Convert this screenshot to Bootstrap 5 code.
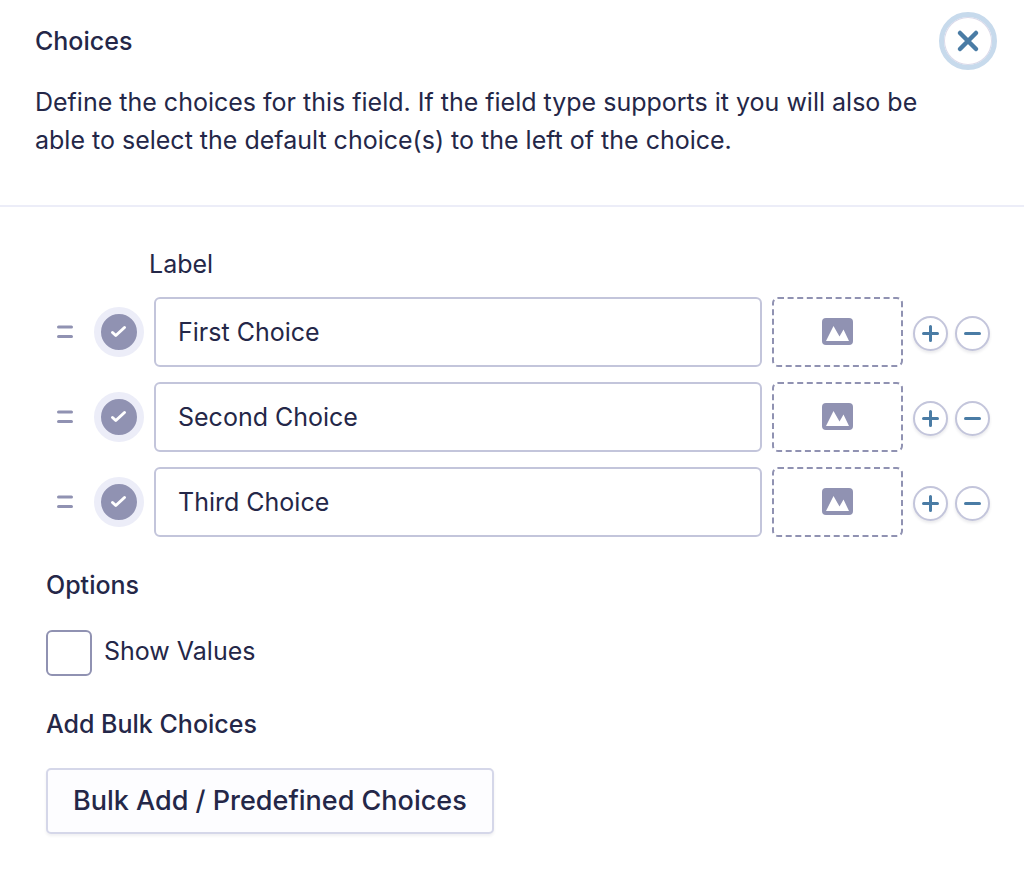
<!DOCTYPE html>
<html lang="en">
<head>
<meta charset="utf-8">
<meta name="viewport" content="width=device-width, initial-scale=1">
<title>Choices</title>
<link href="https://cdn.jsdelivr.net/npm/bootstrap@5.3.0/dist/css/bootstrap.min.css" rel="stylesheet">
<style>
  body { font-family: Inter, sans-serif; font-size: 25px; line-height: 38px; color: #242748; background: #fff; }
  h1, h2 { font-size: 25px; line-height: 32px; font-weight: 500; margin: 0; }
  .panel-head { padding: 12px 27px 46px 35px; border-bottom: 2px solid #ecedf8; }
  .intro { max-width: 900px; margin: 13px 0 0; }
  .icon-btn { flex: none; display: grid; place-items: center; padding: 0; background: #fff; }
  .close-btn { width: 58px; height: 58px; border: 5px solid #c7daec; border-radius: 50%; color: #4a7ca5; box-shadow: inset 0 0 0 1px #dcd9e9; }
  .panel-main { padding: 38px 34px 40px 46px; }
  .label-head { padding-left: 103px; margin-bottom: 14px; }
  .choice-list { display: grid; gap: 15px; }
  .drag-handle { width: 38px; height: 36px; border: 0; color: #9092b2; }
  .default-tick { appearance: none; flex: none; width: 50px; height: 50px; margin: 0 10px; border: 7px solid #ecedf8; border-radius: 50%; background: #9092b2 url("data:image/svg+xml,%3Csvg xmlns='http://www.w3.org/2000/svg' viewBox='0 0 36 36'%3E%3Cpath d='M11.500 18.500l3.300 3 8.700-8' fill='none' stroke='white' stroke-width='3' stroke-linecap='round' stroke-linejoin='round'/%3E%3C/svg%3E") center / 36px no-repeat; }
  .choice-input { height: 70px; border: 2px solid #c3c5db; border-radius: 6px; padding: 0 22px; font-size: 25px; color: #242748; }
  .image-btn { width: 131px; height: 70px; margin: 0 10px; border: 0; color: #9092b2; }
  .round-btn { width: 35px; height: 35px; border: 2px solid #c3c5db; border-radius: 50%; color: #4a7ca5; box-shadow: 0 2px 3px #2427481a; }
  .round-pair { gap: 7px; padding-top: 2px; }
  .options-title { margin: 32px 0 29px; }
  .values-check { gap: 12px; }
  .values-check label { padding-top: 2px; }
  .values-box { appearance: none; width: 46px; height: 46px; border: 2px solid #9092b2; border-radius: 6px; background: #fff; }
  .values-box:checked { background: #9092b2; }
  .bulk-title { margin: 32px 0 28px; }
  .bulk-btn { padding: 12px 25px; border: 2px solid #d5d7e9; border-radius: 5px; background: #fdfdff; color: #242748; font-size: 27px; font-weight: 500; line-height: 38px; box-shadow: 0 2px 3px #24274812; }
</style>
</head>
<body>
<svg class="d-none" aria-hidden="true">
  <symbol id="handle" viewBox="0 0 38 36"><path d="M12.500 13h13M12.500 22.500h13" stroke="currentColor" stroke-width="3" stroke-linecap="round"/></symbol>
  <symbol id="picture" viewBox="0 0 131 70">
    <rect x="1" y="1" width="129" height="68" rx="5" fill="none" stroke="currentColor" stroke-width="2" stroke-dasharray="6 3.600"/>
    <rect x="50" y="21" width="31" height="27" rx="4" fill="currentColor"/>
    <path d="M54 44l7.500-15 6 10.500 4-7 5.500 11.500z" fill="#fff"/>
  </symbol>
  <symbol id="plus" viewBox="0 0 31 31"><path d="M8.500 15.500h14M15.500 8.500v14" stroke="currentColor" stroke-width="3" stroke-linecap="round"/></symbol>
  <symbol id="minus" viewBox="0 0 31 31"><path d="M8.500 15.500h14" stroke="currentColor" stroke-width="3" stroke-linecap="round"/></symbol>
</svg>

<header class="panel-head">
  <div class="d-flex justify-content-between align-items-center">
    <h1>Choices</h1>
    <button type="button" class="icon-btn close-btn" aria-label="Close">
      <svg width="24" height="24" viewBox="0 0 24 24"><path d="M4 4l16 16M20 4L4 20" stroke="currentColor" stroke-width="4.500" stroke-linecap="round"/></svg>
    </button>
  </div>
  <p class="intro">Define the choices for this field. If the field type supports it you will also be able to select the default choice(s) to the left of the choice.</p>
</header>

<main class="panel-main">
  <div class="label-head" id="label-head">Label</div>
  <div class="choice-list">
    <div class="d-flex align-items-center">
      <button type="button" class="icon-btn drag-handle" aria-label="Move first choice"><svg width="38" height="36"><use href="#handle"/></svg></button>
      <input type="checkbox" class="default-tick" aria-label="First choice is default" checked>
      <input type="text" class="form-control choice-input" aria-labelledby="label-head" value="First Choice">
      <button type="button" class="icon-btn image-btn" aria-label="Add image"><svg width="131" height="70"><use href="#picture"/></svg></button>
      <div class="d-flex round-pair">
        <button type="button" class="icon-btn round-btn" aria-label="Add choice"><svg width="31" height="31"><use href="#plus"/></svg></button>
        <button type="button" class="icon-btn round-btn" aria-label="Remove choice"><svg width="31" height="31"><use href="#minus"/></svg></button>
      </div>
    </div>
    <div class="d-flex align-items-center">
      <button type="button" class="icon-btn drag-handle" aria-label="Move second choice"><svg width="38" height="36"><use href="#handle"/></svg></button>
      <input type="checkbox" class="default-tick" aria-label="Second choice is default" checked>
      <input type="text" class="form-control choice-input" aria-labelledby="label-head" value="Second Choice">
      <button type="button" class="icon-btn image-btn" aria-label="Add image"><svg width="131" height="70"><use href="#picture"/></svg></button>
      <div class="d-flex round-pair">
        <button type="button" class="icon-btn round-btn" aria-label="Add choice"><svg width="31" height="31"><use href="#plus"/></svg></button>
        <button type="button" class="icon-btn round-btn" aria-label="Remove choice"><svg width="31" height="31"><use href="#minus"/></svg></button>
      </div>
    </div>
    <div class="d-flex align-items-center">
      <button type="button" class="icon-btn drag-handle" aria-label="Move third choice"><svg width="38" height="36"><use href="#handle"/></svg></button>
      <input type="checkbox" class="default-tick" aria-label="Third choice is default" checked>
      <input type="text" class="form-control choice-input" aria-labelledby="label-head" value="Third Choice">
      <button type="button" class="icon-btn image-btn" aria-label="Add image"><svg width="131" height="70"><use href="#picture"/></svg></button>
      <div class="d-flex round-pair">
        <button type="button" class="icon-btn round-btn" aria-label="Add choice"><svg width="31" height="31"><use href="#plus"/></svg></button>
        <button type="button" class="icon-btn round-btn" aria-label="Remove choice"><svg width="31" height="31"><use href="#minus"/></svg></button>
      </div>
    </div>
  </div>

  <h2 class="options-title">Options</h2>
  <div class="d-flex values-check">
    <input type="checkbox" class="values-box" id="show-values">
    <label for="show-values">Show Values</label>
  </div>

  <h2 class="bulk-title">Add Bulk Choices</h2>
  <button type="button" class="btn bulk-btn">Bulk Add / Predefined Choices</button>
</main>
<script src="https://cdn.jsdelivr.net/npm/bootstrap@5.3.0/dist/js/bootstrap.bundle.min.js"></script>
</body>
</html>
